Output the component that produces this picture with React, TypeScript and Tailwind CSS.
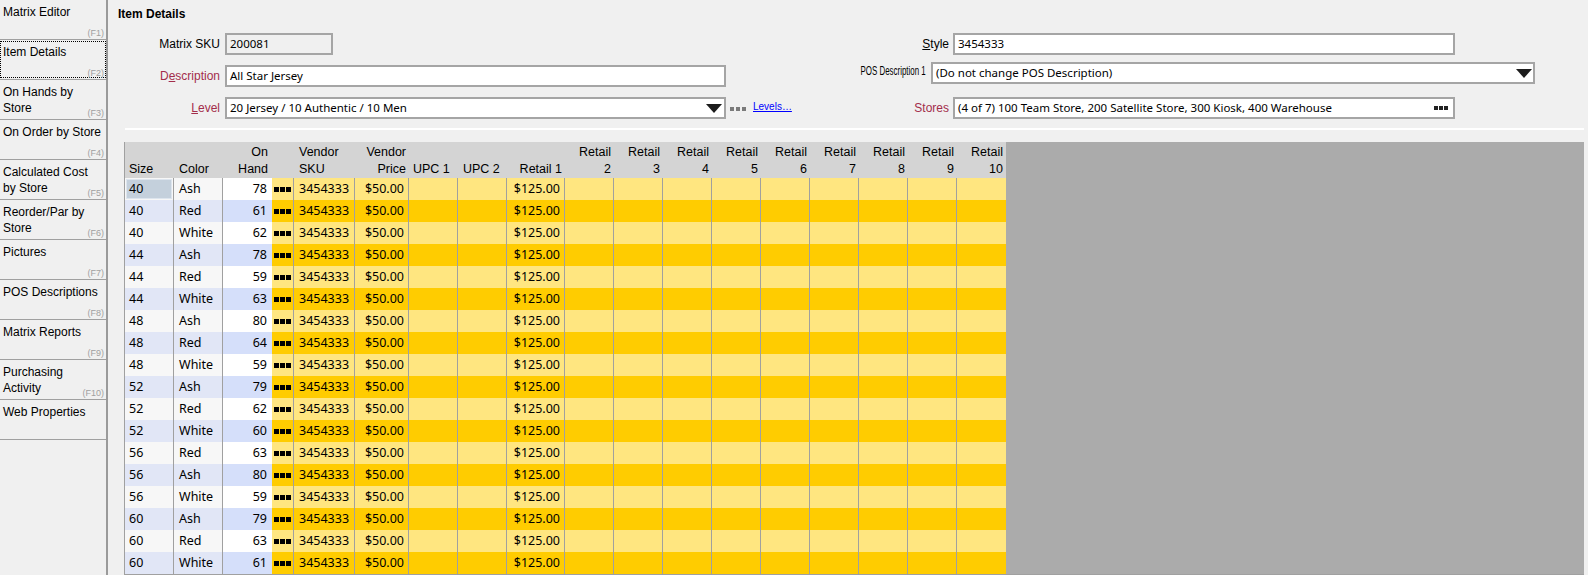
import React from 'react';

type Row = [string, string, number];

const rows: Row[] = [
  ['40', 'Ash', 78],
  ['40', 'Red', 61],
  ['40', 'White', 62],
  ['44', 'Ash', 78],
  ['44', 'Red', 59],
  ['44', 'White', 63],
  ['48', 'Ash', 80],
  ['48', 'Red', 64],
  ['48', 'White', 59],
  ['52', 'Ash', 79],
  ['52', 'Red', 62],
  ['52', 'White', 60],
  ['56', 'Red', 63],
  ['56', 'Ash', 80],
  ['56', 'White', 59],
  ['60', 'Ash', 79],
  ['60', 'Red', 63],
  ['60', 'White', 61],
];

const navItems: { lines: string[]; key: string; focus?: boolean }[] = [
  { lines: ['Matrix Editor'], key: 'F1' },
  { lines: ['Item Details'], key: 'F2', focus: true },
  { lines: ['On Hands by', 'Store'], key: 'F3' },
  { lines: ['On Order by Store'], key: 'F4' },
  { lines: ['Calculated Cost', 'by Store'], key: 'F5' },
  { lines: ['Reorder/Par by', 'Store'], key: 'F6' },
  { lines: ['Pictures'], key: 'F7' },
  { lines: ['POS Descriptions'], key: 'F8' },
  { lines: ['Matrix Reports'], key: 'F9' },
  { lines: ['Purchasing', 'Activity'], key: 'F10' },
  { lines: ['Web Properties'], key: '' },
];

const retailCols = [2, 3, 4, 5, 6, 7, 8, 9, 10];

const SmallDots = () => (
  <div className="flex gap-[2px]">
    <span className="w-[4px] h-[4px] bg-[#7a7a7a]" />
    <span className="w-[4px] h-[4px] bg-[#7a7a7a]" />
    <span className="w-[4px] h-[4px] bg-[#7a7a7a]" />
  </div>
);

const DarkDots = () => (
  <div className="flex gap-[1px]">
    <span className="w-[4px] h-[4px] bg-[#222]" />
    <span className="w-[4px] h-[4px] bg-[#222]" />
    <span className="w-[4px] h-[4px] bg-[#222]" />
  </div>
);

const CellDots = () => (
  <div className="flex gap-[1px]">
    <span className="w-[5px] h-[5px] bg-black" />
    <span className="w-[5px] h-[5px] bg-black" />
    <span className="w-[5px] h-[5px] bg-black" />
  </div>
);

const Caret = () => (
  <svg width="16" height="9" viewBox="0 0 16 9" className="shrink-0">
    <path d="M0 0H16L8 9Z" fill="#1c1c1c" />
  </svg>
);

const inputCls =
  "h-[22px] border-2 border-[#a5a5a5] flex items-center pl-[3px] text-[11.5px] leading-none font-['Noto_Sans',sans-serif] text-black";

const Sidebar: React.FC = () => (
  <aside className="w-[108px] shrink-0 h-full border-r-2 border-[#9a9a9a] bg-[#f0f0f0]">
    {navItems.map(item => (
      <div key={item.lines.join(' ')} className="relative h-[40px] border-b border-[#a0a0a0] pl-[3px] pt-[4px] text-[12px] leading-[16px] text-black">
        {item.focus && <span className="absolute left-0 right-0 top-[1px] bottom-[1px] border border-dotted border-black" />}
        {item.lines.map(l => (
          <div key={l} className="whitespace-nowrap">{l}</div>
        ))}
        {item.key && (
          <span className="absolute right-[2px] bottom-[1px] text-[9px] leading-[10px] text-[#a0a0a0]">({item.key})</span>
        )}
      </div>
    ))}
  </aside>
);

const FormArea: React.FC = () => (
  <div className="flex text-[12px] text-black">
    <div className="w-[692px] shrink-0 flex flex-col">
      <div className="flex items-center h-[22px]">
        <span className="w-[112px] text-right">Matrix SKU</span>
        <div className={`${inputCls} ml-[5px] w-[108px] bg-[#f0f0f0]`}>200081</div>
      </div>
      <div className="flex items-center h-[22px] mt-[10px]">
        <span className="w-[112px] text-right text-[#a32d4b]">D<span className="underline">e</span>scription</span>
        <div className={`${inputCls} ml-[5px] w-[501px] bg-white`}>All Star Jersey</div>
      </div>
      <div className="flex items-center h-[22px] mt-[10px]">
        <span className="w-[112px] text-right text-[#a32d4b]"><span className="underline">L</span>evel</span>
        <div className={`${inputCls} ml-[5px] w-[501px] bg-white justify-between pr-[2px]`}>
          <span>20 Jersey / 10 Authentic / 10 Men</span>
          <Caret />
        </div>
        <div className="ml-[4px] mt-[2px]"><SmallDots /></div>
        <span className="ml-[7px] text-[10px] leading-none text-[#0000ff] underline -mt-[2px]">Levels…</span>
      </div>
    </div>
    <div className="flex-1 flex flex-col">
      <div className="flex items-center h-[22px]">
        <span className="w-[149px] text-right"><span className="underline">S</span>tyle</span>
        <div className={`${inputCls} ml-[4px] w-[502px] bg-white`}>3454333</div>
      </div>
      <div className="flex items-center h-[22px] mt-[7px]">
        <div className="w-[126px] flex justify-end -mt-[4px]">
          <span className="inline-block whitespace-nowrap text-[12px] leading-[14px] scale-x-[0.66] origin-right">POS Description 1</span>
        </div>
        <div className={`${inputCls} ml-[5px] w-[604px] bg-white justify-between pr-[1px]`}>
          <span>(Do not change POS Description)</span>
          <Caret />
        </div>
      </div>
      <div className="flex items-center h-[22px] mt-[13px]">
        <span className="w-[149px] text-right text-[#a32d4b]">Stores</span>
        <div className={`${inputCls} ml-[4px] w-[502px] bg-white justify-between pr-[5px]`}>
          <span>(4 of 7) 100 Team Store, 200 Satellite Store, 300 Kiosk, 400 Warehouse</span>
          <DarkDots />
        </div>
      </div>
    </div>
  </div>
);

const headCls = 'shrink-0 flex flex-col justify-end leading-[17px] bg-[#d4d4d4]';
const cellBorder = 'border-r border-[#a0a0a0]';

const Grid: React.FC = () => (
  <div className="ml-[16px] mr-[4px] mt-[12px] h-[433px] bg-[#ababab] border-l border-b border-[#a0a0a0] flex flex-col overflow-hidden">
    <div className="flex h-[36px] shrink-0 text-[12.5px] text-black">
      <div className={`${headCls} w-[49px] pl-[4px]`}>Size</div>
      <div className={`${headCls} w-[49px] pl-[5px]`}>Color</div>
      <div className={`${headCls} w-[49px] pr-[4px] items-end text-right`}><span>On</span><span>Hand</span></div>
      <div className={`${headCls} w-[22px]`} />
      <div className={`${headCls} w-[61px] pl-[5px]`}><span>Vendor</span><span>SKU</span></div>
      <div className={`${headCls} w-[54px] pr-[3px] items-end text-right`}><span>Vendor</span><span>Price</span></div>
      <div className={`${headCls} w-[49px] pl-[4px]`}>UPC 1</div>
      <div className={`${headCls} w-[49px] pl-[5px]`}>UPC 2</div>
      <div className={`${headCls} w-[58px] pr-[3px] items-end text-right`}>Retail 1</div>
      {retailCols.map(n => (
        <div key={n} className={`${headCls} w-[49px] pr-[3px] items-end text-right`}><span>Retail</span><span>{n}</span></div>
      ))}
    </div>
    {rows.map(([size, color, onHand], i) => {
      const odd = i % 2 === 0;
      const sideBg = odd ? 'bg-[#f7f7f7]' : 'bg-[#e1e6f6]';
      const handBg = odd ? 'bg-white' : 'bg-[#d5dffa]';
      const yel = odd ? 'bg-[#ffe680]' : 'bg-[#ffcc00]';
      return (
        <div key={i} className="flex h-[22px] shrink-0 text-[12.5px] leading-[22px] text-black font-['Noto_Sans',sans-serif]">
          <div className={`w-[49px] shrink-0 ${cellBorder} ${sideBg} ${i === 0 ? 'p-[1px]' : 'pl-[4px]'}`}>
            {i === 0 ? (
              <div className="h-full bg-[#c4d0dc] border border-[#dde5ee] pl-[2px] leading-[18px]">{size}</div>
            ) : (
              size
            )}
          </div>
          <div className={`w-[49px] shrink-0 pl-[5px] ${cellBorder} ${sideBg}`}>{color}</div>
          <div className={`w-[49px] shrink-0 pr-[5px] text-right ${handBg}`}>{onHand}</div>
          <div className={`w-[22px] shrink-0 flex items-center justify-center ${cellBorder} ${yel}`}><CellDots /></div>
          <div className={`w-[61px] shrink-0 pl-[5px] ${cellBorder} ${yel}`}>3454333</div>
          <div className={`w-[54px] shrink-0 pr-[4px] text-right ${cellBorder} ${yel}`}>$50.00</div>
          <div className={`w-[49px] shrink-0 ${cellBorder} ${yel}`} />
          <div className={`w-[49px] shrink-0 ${cellBorder} ${yel}`} />
          <div className={`w-[58px] shrink-0 pr-[4px] text-right ${cellBorder} ${yel}`}>$125.00</div>
          {retailCols.map(n => (
            <div key={n} className={`w-[49px] shrink-0 ${n < 10 ? cellBorder : ''} ${yel}`} />
          ))}
        </div>
      );
    })}
  </div>
);

export default function App() {
  return (
    <div className="w-[1588px] h-[575px] overflow-hidden flex bg-[#f0f0f0] font-['Liberation_Sans',Arial,sans-serif]">
      <Sidebar />
      <main className="flex-1 flex flex-col min-w-0">
        <div className="h-[33px] shrink-0 pl-[10px] pt-[7px] text-[12px] leading-[14px] font-bold text-black">Item Details</div>
        <FormArea />
        <div className="ml-[17px] mr-[4px] mt-[9px] h-[2px] bg-white shrink-0" />
        <Grid />
      </main>
    </div>
  );
}
